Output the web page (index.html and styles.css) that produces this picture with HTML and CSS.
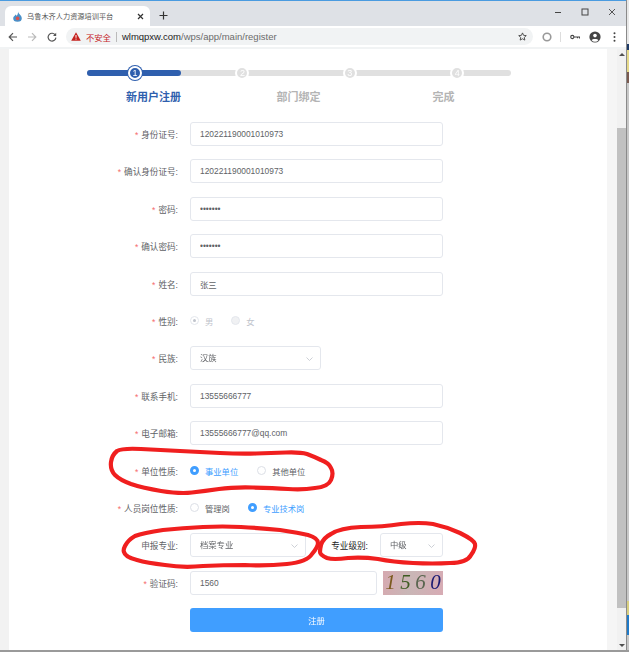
FILE: index.html
```html
<!DOCTYPE html>
<html lang="en">

<head>
    <meta charset="utf-8">
    <title>乌鲁木齐人力资源培训平台</title>
    <link rel="stylesheet" href="styles.css">
</head>

<body>
    <div class="screen">
        <div class="window">
            <!-- Tab strip -->
            <div class="tabstrip">
                <div class="tab">
                    <svg class="favicon" width="11" height="11" viewBox="0 0 11 11">
                        <path d="M6 0.5C6.5 3 9.8 4.5 9.8 7.2A4.3 3.6 0 0 1 1.2 7.2C1.2 5.5 3 5 3.5 3.5 4.3 4 4.6 4.5 4.6 5 5.6 4 6.2 2 6 0.5Z" fill="#4a90c8"/>
                        <circle cx="5.6" cy="7.4" r="1.8" fill="#d9534f"/>
                    </svg>
                    <span class="tab-title">乌鲁木齐人力资源培训平台</span>
                    <svg class="tab-close" width="7" height="7" viewBox="0 0 7 7"><path d="M1 1L6 6M6 1L1 6" stroke="#333" stroke-width="1.2"/></svg>
                </div>
                <svg class="new-tab" width="9" height="9" viewBox="0 0 9 9"><path d="M4.5 0.5V8.5M0.5 4.5H8.5" stroke="#333" stroke-width="1.2"/></svg>
                <div class="win-controls">
                    <svg width="8" height="8" viewBox="0 0 8 8"><path d="M1 4.5H7" stroke="#444" stroke-width="1"/></svg>
                    <svg width="8" height="8" viewBox="0 0 8 8"><rect x="1" y="1" width="6" height="6" fill="none" stroke="#444" stroke-width="1"/></svg>
                    <svg width="8" height="8" viewBox="0 0 8 8"><path d="M1 1L7 7M7 1L1 7" stroke="#444" stroke-width="0.9"/></svg>
                </div>
            </div>

            <!-- Toolbar -->
            <div class="toolbar">
                <svg class="tool-back" width="10" height="10" viewBox="0 0 10 10"><path d="M9 5H1.5M5 1.2L1.2 5L5 8.8" fill="none" stroke="#555" stroke-width="1.2"/></svg>
                <svg class="tool-forward" width="10" height="10" viewBox="0 0 10 10"><path d="M1 5H8.5M5 1.2L8.8 5L5 8.8" fill="none" stroke="#bbb" stroke-width="1.2"/></svg>
                <svg class="tool-reload" width="10" height="10" viewBox="0 0 10 10"><path d="M8.4 3.2A3.9 3.9 0 1 0 8.9 5.6" fill="none" stroke="#555" stroke-width="1.2"/><path d="M9.2 0.8V4H6Z" fill="#555"/></svg>
                <div class="omnibox">
                    <svg width="10" height="9" viewBox="0 0 10 9"><path d="M5 0.3L9.8 8.7H0.2Z" fill="#c5221f"/><path d="M5 3V5.8M5 6.6V7.6" stroke="#fff" stroke-width="1"/></svg>
                    <span class="not-secure">不安全</span>
                    <span class="omni-sep"></span>
                    <span class="url"><b>wlmqpxw.com</b>/wps/app/main/register</span>
                    <svg class="star" width="9" height="9" viewBox="0 0 10 10"><path d="M5 1L6.2 3.7L9.2 4L7 6L7.6 9L5 7.5L2.4 9L3 6L0.8 4L3.8 3.7Z" fill="none" stroke="#444" stroke-width="1"/></svg>
                </div>
                <svg class="tool-ext" width="10" height="10" viewBox="0 0 10 10"><circle cx="5" cy="5" r="3.8" fill="none" stroke="#999" stroke-width="1.6"/></svg>
                <span class="tool-sep"></span>
                <svg class="tool-key" width="10" height="6" viewBox="0 0 10 6"><circle cx="2.3" cy="3" r="1.6" fill="none" stroke="#444" stroke-width="1.1"/><path d="M4 3H9.6V4.6M7.5 3V4.2" fill="none" stroke="#444" stroke-width="1.1"/></svg>
                <svg class="tool-account" width="12" height="12" viewBox="0 0 12 12"><circle cx="6" cy="6" r="5.6" fill="#444"/><circle cx="6" cy="4.6" r="1.8" fill="#fff"/><path d="M2.6 9.2C3.4 7.6 8.6 7.6 9.4 9.2A4.6 4.6 0 0 1 2.6 9.2Z" fill="#fff"/></svg>
                <svg class="tool-menu" width="3" height="10" viewBox="0 0 3 10"><circle cx="1.5" cy="1.3" r="1" fill="#444"/><circle cx="1.5" cy="5" r="1" fill="#444"/><circle cx="1.5" cy="8.7" r="1" fill="#444"/></svg>
            </div>

            <div class="content">
                <div class="gutter"></div>

                <main class="page">
                    <div class="steps">
                        <div class="steps-track"><div class="steps-fill"></div></div>
                        <div class="steps-dots">
                            <span class="dot dot-active">1</span>
                            <span class="dot">2</span>
                            <span class="dot">3</span>
                            <span class="dot">4</span>
                        </div>
                    </div>
                    <div class="step-titles">
                        <span class="step-title step-title-active">新用户注册</span>
                        <span class="step-title">部门绑定</span>
                        <span class="step-title">完成</span>
                    </div>

                    <form class="form" onsubmit="return false;">
                        <div class="row">
                            <label class="label required">身份证号:</label>
                            <input class="input" type="text" value="120221190001010973">
                        </div>
                        <div class="row">
                            <label class="label required">确认身份证号:</label>
                            <input class="input" type="text" value="120221190001010973">
                        </div>
                        <div class="row">
                            <label class="label required">密码:</label>
                            <input class="input" type="password" value="1234567">
                        </div>
                        <div class="row">
                            <label class="label required">确认密码:</label>
                            <input class="input" type="password" value="1234567">
                        </div>
                        <div class="row">
                            <label class="label required">姓名:</label>
                            <input class="input" type="text" value="张三">
                        </div>
                        <div class="row">
                            <label class="label required">性别:</label>
                            <span class="radio radio-disabled-on"></span>
                            <span class="radio-text text-disabled gap-sex">男</span>
                            <span class="radio radio-disabled"></span>
                            <span class="radio-text text-disabled">女</span>
                        </div>
                        <div class="row">
                            <label class="label required">民族:</label>
                            <div class="select select-nation">汉族
                                <svg class="chevron" width="7" height="4" viewBox="0 0 7 4"><path d="M0.5 0.5L3.5 3.5L6.5 0.5" fill="none" stroke="#c0c4cc" stroke-width="0.8"/></svg>
                            </div>
                        </div>
                        <div class="row">
                            <label class="label required">联系手机:</label>
                            <input class="input" type="text" value="13555666777">
                        </div>
                        <div class="row">
                            <label class="label required">电子邮箱:</label>
                            <input class="input" type="text" value="13555666777@qq.com">
                        </div>
                        <div class="row">
                            <label class="label required">单位性质:</label>
                            <span class="radio radio-on"></span>
                            <span class="radio-text text-on gap-unit">事业单位</span>
                            <span class="radio"></span>
                            <span class="radio-text">其他单位</span>
                        </div>
                        <div class="row">
                            <label class="label required">人员岗位性质:</label>
                            <span class="radio"></span>
                            <span class="radio-text gap-post">管理岗</span>
                            <span class="radio radio-on"></span>
                            <span class="radio-text text-on">专业技术岗</span>
                        </div>
                        <div class="row">
                            <label class="label">申报专业:</label>
                            <div class="select select-major">档案专业
                                <svg class="chevron" width="7" height="4" viewBox="0 0 7 4"><path d="M0.5 0.5L3.5 3.5L6.5 0.5" fill="none" stroke="#c0c4cc" stroke-width="0.8"/></svg>
                            </div>
                            <label class="label-level">专业级别:</label>
                            <div class="select select-level">中级
                                <svg class="chevron" width="7" height="4" viewBox="0 0 7 4"><path d="M0.5 0.5L3.5 3.5L6.5 0.5" fill="none" stroke="#c0c4cc" stroke-width="0.8"/></svg>
                            </div>
                        </div>
                        <div class="row">
                            <label class="label required">验证码:</label>
                            <input class="input input-code" type="text" value="1560">
                            <div class="captcha">
                                <span class="c1">1</span><span class="c2">5</span><span class="c3">6</span><span class="c4">0</span>
                            </div>
                        </div>
                        <div class="row">
                            <span class="label"></span>
                            <button class="submit" type="submit">注册</button>
                        </div>
                    </form>
                </main>

                <div class="scroll-gap"></div>
                <div class="scrollbar">
                    <span class="arrow-up"></span>
                    <div class="thumb"></div>
                    <span class="arrow-down"></span>
                </div>
            </div>
        </div>

        <!-- Bit of the desktop showing next to the window -->
        <div class="desktop">
            <div class="d-top"></div>
            <div class="d-navy"></div>
            <div class="d-yellow"></div>
            <div class="d-brown"></div>
            <div class="d-mid"></div>
            <div class="d-yellow2"></div>
            <div class="d-blue"></div>
            <div class="d-end"></div>
        </div>

        <!-- Red marks drawn by hand on the screenshot -->
        <svg class="marks" width="629" height="652" viewBox="0 0 629 652">
            <path d="M141 449Q160 450 180 451Q200 452 220 453Q240 454 256 453.5Q273 453 286 452.5Q300 452 307 454Q315 457 321 460Q329 463 331 468Q334 473 331 480Q328 487 315 488Q303 490 288 489Q273 488 253 487.5Q233 487 219 489Q205 491 192 492.5Q180 494 161 491Q143 488 131 484Q120 480 115 475Q110 470 111 462Q112 455 117 451Q122 448 141 449Z"/>
            <path d="M125 546Q128 540 135 536Q143 533 163 530Q183 528 203 527Q223 526 241 527Q260 528 280 530Q300 533 308 535Q318 538 318 543Q318 547 312 554Q307 562 287 564Q267 566 245 565Q223 565 203 566Q183 568 165 565Q147 563 137 560Q125 557 124 552Q123 550 125 546Z"/>
            <path d="M321 545Q323 538 331 534Q340 528 361 527Q383 527 401 524Q420 522 433 524Q447 527 460 533Q474 540 475 544Q476 548 471 555Q467 563 450 563Q433 564 413 563Q393 562 378 559Q363 557 348 558Q333 560 327 558Q320 555 320 552Q320 549 321 545Z"/>
        </svg>
    </div>
</body>

</html>
```

FILE: styles.css
```css
* {
    box-sizing: border-box;
}

html, body {
    margin: 0;
    padding: 0;
    overflow: hidden;
}

body {
    font-family: "Liberation Sans", "Noto Sans CJK SC", sans-serif;
    font-size: 8.3px;
    color: #606266;
    background: #fff;
}

.screen {
    position: relative;
    display: flex;
    width: 629px;
    height: 652px;
    border-bottom: 2px solid #9a9a9a;
    filter: blur(0.3px);
}

.window {
    display: flex;
    flex-direction: column;
    width: 626px;
    border-top: 1px solid #4a9be0;
}

/* browser chrome */
.tabstrip {
    display: flex;
    align-items: flex-end;
    height: 25px;
    padding-left: 5px;
    background: #dee1e6;
}

.tab {
    display: flex;
    align-items: center;
    width: 145px;
    height: 20px;
    padding: 0 6px 0 7px;
    background: #fff;
    border-radius: 6px 6px 0 0;
}

.favicon {
    margin-right: 4px;
}

.tab-title {
    flex: 1;
    font-size: 7.2px;
    color: #555;
}

.new-tab {
    margin: 0 0 6px 9px;
}

.win-controls {
    display: flex;
    gap: 19px;
    margin: 0 10px 10px auto;
}

.toolbar {
    display: flex;
    align-items: center;
    height: 21px;
    background: #fff;
}

.tool-back {
    margin-left: 8px;
}

.tool-forward {
    margin-left: 9px;
}

.tool-reload {
    margin-left: 10px;
}

.omnibox {
    display: flex;
    align-items: center;
    width: 467px;
    height: 17px;
    margin-left: 9px;
    padding: 0 6px 0 5px;
    background: #f1f3f4;
    border-radius: 9px;
}

.not-secure {
    margin-left: 5px;
    color: #c5221f;
}

.omni-sep {
    width: 1px;
    height: 10px;
    margin: 0 5px;
    background: #bbb;
}

.url {
    font-size: 9.5px;
    color: #6b6b6b;
}

.url b {
    font-weight: normal;
    color: #222;
}

.star {
    margin-left: auto;
}

.tool-ext {
    margin-left: 9px;
}

.tool-sep {
    width: 1px;
    height: 10px;
    margin-left: 8px;
    background: #ddd;
}

.tool-key {
    margin-left: 9px;
}

.tool-account {
    margin-left: 9px;
}

.tool-menu {
    margin-left: 12px;
}

/* page area */
.content {
    display: flex;
    flex: 1;
    min-height: 0;
    border-top: 2px solid #f1f3f4;
}

.gutter {
    width: 9px;
    background: #f2f2f2;
}

.page {
    width: 598px;
    background: #fff;
}

.scroll-gap {
    width: 10px;
    background: #f5f5f5;
}

.scrollbar {
    display: flex;
    flex-direction: column;
    align-items: center;
    width: 9px;
    background: #f1f1f1;
}

.arrow-up {
    margin-top: 4px;
    border-left: 3px solid transparent;
    border-right: 3px solid transparent;
    border-bottom: 3px solid #505050;
}

.thumb {
    width: 100%;
    height: 480px;
    margin-top: 72px;
    background: #c1c1c1;
}

.arrow-down {
    margin-top: auto;
    margin-bottom: 3px;
    border-left: 3px solid transparent;
    border-right: 3px solid transparent;
    border-top: 3px solid #505050;
}

.desktop {
    display: flex;
    flex-direction: column;
    width: 3px;
    border-left: 1px solid #8a8a8a;
}

.d-top { height: 44px; background: #e8e8e8; }
.d-navy { height: 6px; background: #1d3a66; }
.d-yellow { height: 22px; background: #e6d98a; }
.d-brown { height: 11px; background: #7a5a50; }
.d-mid { height: 518px; background: #c8c8c8; }
.d-yellow2 { height: 14px; background: #d8cf80; }
.d-blue { height: 20px; background: #1f7ac8; }
.d-end { flex: 1; background: #c8c8c8; }

/* steps */
.steps {
    position: relative;
    width: 424px;
    height: 14px;
    margin: 17px 0 0 78px;
}

.steps-track {
    position: absolute;
    left: 0;
    right: 0;
    top: 4px;
    height: 6px;
    background: #e0e0e0;
    border-radius: 3px;
}

.steps-fill {
    width: 94px;
    height: 100%;
    background: #2f5fae;
    border-radius: 3px;
}

.steps-dots {
    position: relative;
    display: flex;
    gap: 93.4px;
    padding-left: 41px;
}

.dot {
    width: 14px;
    height: 14px;
    font-size: 9px;
    line-height: 10px;
    text-align: center;
    color: #fff;
    background: #e0e0e0;
    border: 2px solid #fff;
    border-radius: 50%;
}

.dot-active {
    background: #2f5fae;
    box-shadow: 0 0 0 1px #2f5fae;
}

.step-titles {
    display: flex;
    margin: 9px 0 0 72px;
}

.step-title {
    width: 145px;
    font-size: 11px;
    font-weight: bold;
    line-height: 16px;
    text-align: center;
    color: #b4b4b4;
}

.step-title-active {
    color: #2f5fae;
}

/* form */
.form {
    display: flex;
    flex-direction: column;
    gap: 13.4px;
    margin-top: 17px;
}

.row {
    display: flex;
    align-items: center;
    height: 24px;
}

.label {
    flex: none;
    width: 181px;
    padding-right: 12px;
    font-size: 8.6px;
    text-align: right;
}

.required::before {
    content: "*";
    margin-right: 3px;
    color: #f56c6c;
}

.input {
    width: 253px;
    height: 24px;
    padding: 0 9px;
    font: inherit;
    font-size: 8.4px;
    color: #606266;
    background: #fff;
    border: 1px solid #e4e7ed;
    border-radius: 3px;
    outline: none;
}

.input-code {
    width: 187px;
}

.select {
    position: relative;
    flex: none;
    height: 24px;
    padding-left: 9px;
    line-height: 22px;
    border: 1px solid #e4e7ed;
    border-radius: 3px;
}

.select-nation {
    width: 131px;
}

.select-major {
    width: 116px;
}

.select-level {
    width: 63px;
}

.chevron {
    position: absolute;
    right: 7px;
    top: 10px;
}

.label-level {
    width: 74px;
    padding-right: 12px;
    font-size: 8.6px;
    text-align: right;
    color: #222;
}

/* radios */
.radio {
    flex: none;
    width: 9px;
    height: 9px;
    margin-right: 6px;
    border: 1px solid #dcdfe6;
    border-radius: 50%;
}

.radio-on {
    background: #fff;
    border: 3px solid #409eff;
}

.radio-disabled {
    background: #f0f1f3;
    border-color: #e4e7ed;
}

.radio-disabled-on {
    background: #c0c4cc content-box;
    border-color: #e4e7ed;
    padding: 2px;
}

.radio-text {
    white-space: nowrap;
}

.text-on {
    color: #409eff;
}

.text-disabled {
    color: #c0c4cc;
}

.gap-sex {
    margin-right: 18px;
}

.gap-unit {
    margin-right: 19px;
}

.gap-post {
    margin-right: 18px;
}

.captcha {
    display: flex;
    justify-content: space-around;
    align-items: center;
    width: 60px;
    height: 24px;
    margin-left: 6px;
    font-family: "Liberation Serif", serif;
    font-size: 21px;
    font-style: italic;
    background: linear-gradient(100deg, #d6a9b0, #c9b6b6 45%, #d7abb4);
}

.c1 { color: #7a5a1e; }
.c2 { color: #3f5c22; }
.c3 { color: #5a6650; }
.c4 { color: #1a1a72; }

.submit {
    width: 253px;
    height: 24px;
    padding: 0;
    font: inherit;
    color: #fff;
    background: #409eff;
    border: none;
    border-radius: 3px;
}

/* hand drawn marks over the page */
.marks {
    position: absolute;
    left: 0;
    top: 0;
    pointer-events: none;
}

.marks path {
    fill: none;
    stroke: #f01f1f;
    stroke-width: 4.2;
    stroke-linejoin: round;
    stroke-linecap: round;
}
```
